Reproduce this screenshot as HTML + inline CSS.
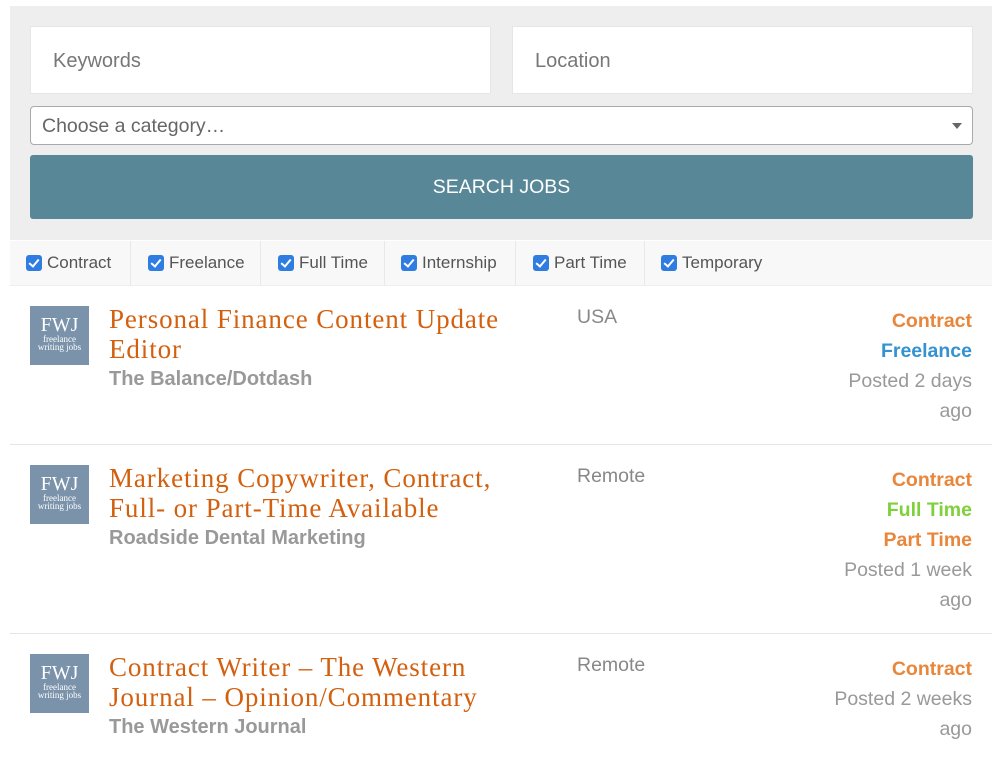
<!DOCTYPE html>
<html><head><meta charset="utf-8"><style>
body{margin:0;background:#fff;font-family:"Liberation Sans",sans-serif;width:1000px;height:760px;overflow:hidden;position:relative}
.panel{position:absolute;left:10px;top:6px;width:982px;height:234px;background:#eeeeee}
.inp{position:absolute;top:20px;height:68px;background:#fff;border:1px solid #e6e6e6;box-sizing:border-box;font-size:20px;color:#777;padding:0 0 0 22px;line-height:68px}
.sel{position:absolute;left:20px;top:100px;width:943px;height:39px;background:#fff;border:1px solid #aaa;border-radius:4px;box-sizing:border-box;font-size:19.5px;color:#666;padding-left:11px;line-height:39px}
.sel:after{content:"";position:absolute;right:10px;top:16px;border:5px solid transparent;border-top:6px solid #666}
.btn{position:absolute;left:20px;top:149px;width:943px;height:64px;background:#588797;border-radius:3px;color:#fff;font-size:19.5px;text-align:center;line-height:64px}
.filters{position:absolute;left:10px;top:241px;width:982px;height:44px;background:#f8f8f8;border-bottom:1px solid #eee}
.f{position:absolute;top:0;height:44px;line-height:44px;font-size:17px;color:#555;border-right:1px solid #e8e8e8;box-sizing:border-box}
.cb{display:inline-block;width:16px;height:16px;background:#2f7de1;border-radius:3px;vertical-align:-3px;margin-right:5px;position:relative}
.cb:after{content:"";position:absolute;left:5px;top:2px;width:4px;height:8px;border:solid #fff;border-width:0 2px 2px 0;transform:rotate(40deg)}
.row{position:absolute;left:10px;width:982px;border-bottom:1px solid #e6e6e6}
.logo{position:absolute;left:20px;top:20px;width:59px;height:59px;background:#7b93aa;color:#fff;text-align:center;font-family:"Liberation Serif",serif}
.logo b{display:block;font-weight:normal;font-size:20px;margin-top:9px;line-height:20px}
.logo i{display:block;font-style:normal;font-size:9px;line-height:8px}
.t{position:absolute;left:99px;top:18px;width:410px;font-family:"Liberation Serif",serif;font-size:27px;letter-spacing:0.9px;line-height:30px;color:#d3600f}
.co{font-family:"Liberation Sans",sans-serif;font-weight:bold;font-size:20px;letter-spacing:0;color:#999;line-height:30px;display:block}
.loc{position:absolute;left:567px;top:20px;font-size:19.5px;color:#888}
.r{position:absolute;right:20px;top:20px;text-align:right;font-size:19.5px;line-height:30px;color:#999}
.r b{display:block}
</style></head><body>
<div class="panel">
<div class="inp" style="left:20px;width:461px">Keywords</div>
<div class="inp" style="left:502px;width:461px">Location</div>
<div class="sel">Choose a category…</div>
<div class="btn">SEARCH JOBS</div>
</div>
<div class="filters">
<div class="f" style="left:0;width:121px;padding-left:16px"><span class="cb"></span>Contract</div>
<div class="f" style="left:121px;width:130px;padding-left:17px"><span class="cb"></span>Freelance</div>
<div class="f" style="left:251px;width:124px;padding-left:17px"><span class="cb"></span>Full Time</div>
<div class="f" style="left:375px;width:131px;padding-left:16px"><span class="cb"></span>Internship</div>
<div class="f" style="left:506px;width:129px;padding-left:17px"><span class="cb"></span>Part Time</div>
<div class="f" style="left:635px;width:140px;padding-left:16px;border:0"><span class="cb"></span>Temporary</div>
</div>

<div class="row" style="top:286px;height:158px">
<div class="logo"><b>FWJ</b><i>freelance<br>writing jobs</i></div>
<div class="t">Personal Finance Content Update Editor<span class="co">The Balance/Dotdash</span></div>
<div class="loc">USA</div>
<div class="r"><b style="color:#e8873c">Contract</b><b style="color:#3592d0">Freelance</b>Posted 2 days<br>ago</div>
</div>
<div class="row" style="top:445px;height:188px">
<div class="logo"><b>FWJ</b><i>freelance<br>writing jobs</i></div>
<div class="t">Marketing Copywriter, Contract,<br>Full- or Part-Time Available<span class="co">Roadside Dental Marketing</span></div>
<div class="loc">Remote</div>
<div class="r"><b style="color:#e8873c">Contract</b><b style="color:#7fd13b">Full Time</b><b style="color:#e8873c">Part Time</b>Posted 1 week<br>ago</div>
</div>
<div class="row" style="top:634px;height:140px;border:0">
<div class="logo"><b>FWJ</b><i>freelance<br>writing jobs</i></div>
<div class="t">Contract Writer – The Western<br>Journal – Opinion/Commentary<span class="co">The Western Journal</span></div>
<div class="loc">Remote</div>
<div class="r"><b style="color:#e8873c">Contract</b>Posted 2 weeks<br>ago</div>
</div>
</body></html>
